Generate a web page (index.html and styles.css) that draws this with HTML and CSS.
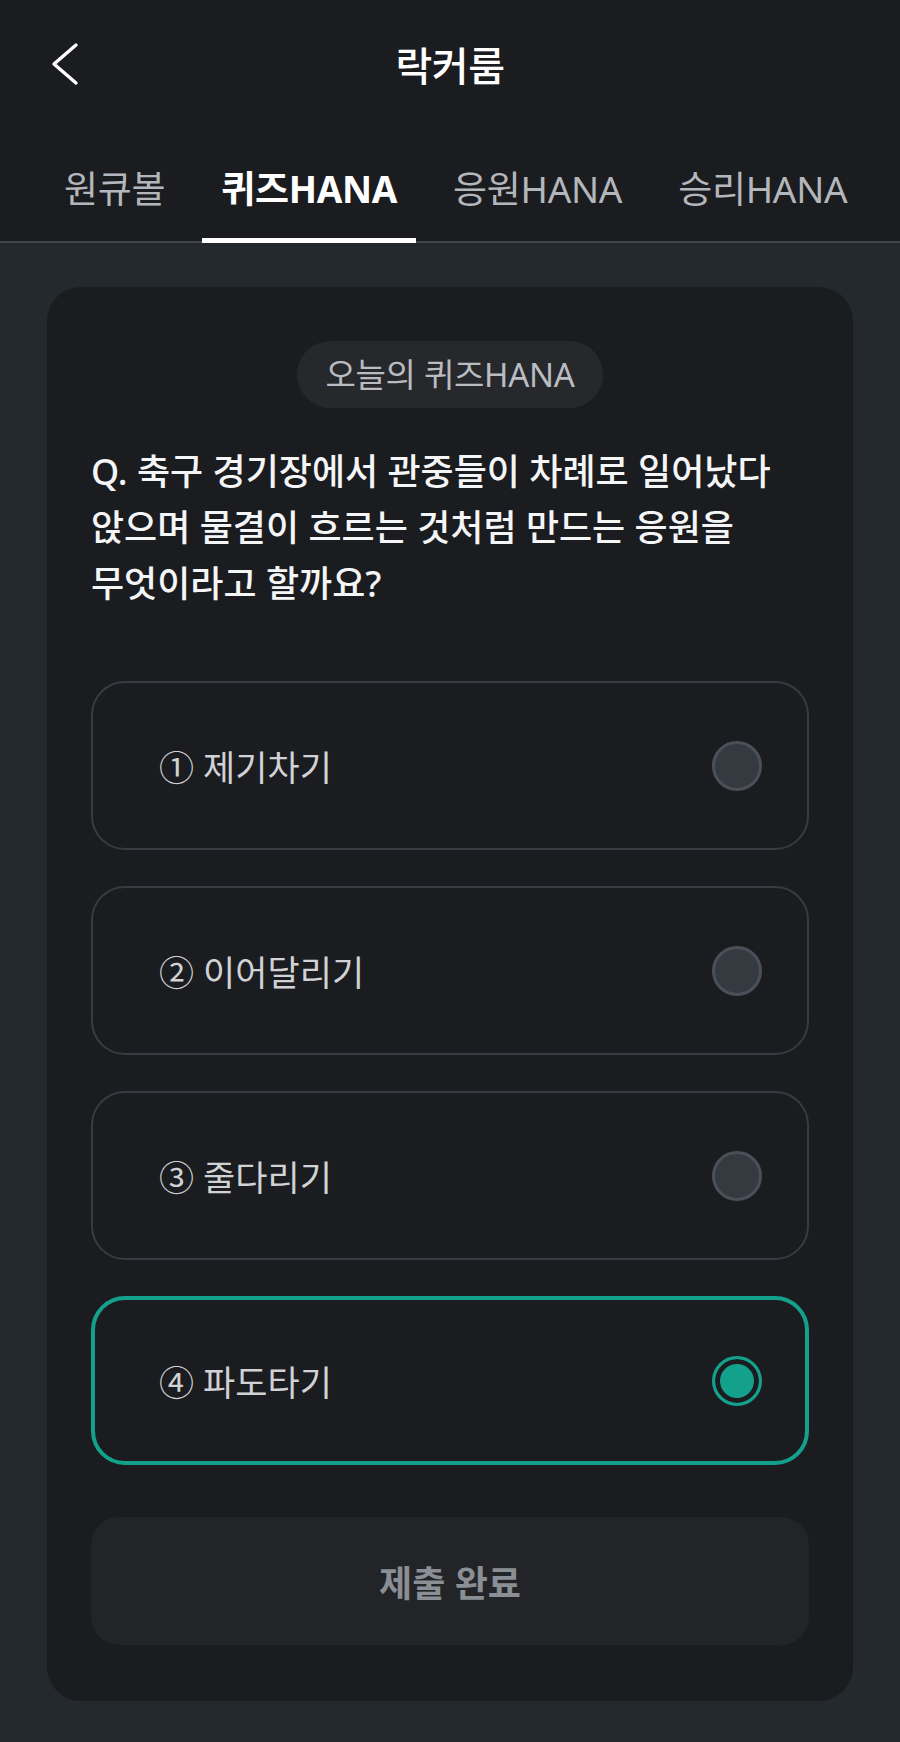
FILE: index.html
```html
<!DOCTYPE html>
<html lang="ko">
<head>
  <meta charset="utf-8">
  <link rel="stylesheet" href="styles.css">
</head>
<body>
<div class="page">
  <div class="header">
    <div class="topbar">
      <a class="back" href="#">
        <svg width="30" height="44" viewBox="0 0 30 44">
          <polyline points="26,3 4,22 26,41" fill="none" stroke="#ffffff" stroke-width="3.4" stroke-linecap="round" stroke-linejoin="round"/>
        </svg>
      </a>
      <div class="title">락커룸</div>
      <div></div>
    </div>
    <ul class="tabs">
      <li class="tab">원큐볼</li>
      <li class="tab active">퀴즈HANA</li>
      <li class="tab">응원HANA</li>
      <li class="tab">승리HANA</li>
    </ul>
  </div>

  <div class="content">
    <div class="card">
      <div class="badge">오늘의 퀴즈HANA</div>
      <p class="question">Q. 축구 경기장에서 관중들이 차례로 일어났다 앉으며 물결이 흐르는 것처럼 만드는 응원을 무엇이라고 할까요?</p>

      <ul class="options">
        <li class="option"><span class="label">① 제기차기</span><span class="radio"></span></li>
        <li class="option"><span class="label">② 이어달리기</span><span class="radio"></span></li>
        <li class="option"><span class="label">③ 줄다리기</span><span class="radio"></span></li>
        <li class="option selected"><span class="label">④ 파도타기</span><span class="radio"></span></li>
      </ul>

      <button class="submit">제출 완료</button>
    </div>
  </div>
</div>
</body>
</html>
```

FILE: styles.css
```css
* {
  box-sizing: border-box;
}
body {
  margin: 0;
  background-color: #23292c;
  font-family: "Noto Sans", "Noto Sans CJK KR", sans-serif;
  color: #ffffff;
}
ul {
  list-style: none;
  margin: 0;
  padding: 0;
}
.page {
  width: 900px;
  min-height: 1742px;
}

/* header */
.header {
  background-color: #1b1c1f;
}
.topbar {
  height: 128px;
  display: grid;
  grid-template-columns: 1fr auto 1fr;
  align-items: center;
}
.back {
  display: flex;
  align-items: center;
  padding-left: 50px;
}
.title {
  font-size: 40px;
  font-weight: 500;
  letter-spacing: -0.5px;
}
.tabs {
  display: flex;
  gap: 18px;
  padding-left: 45px;
  border-bottom: 2px solid #40464b;
}
.tab {
  position: relative;
  padding: 36px 19px 27px;
  line-height: 50px;
  font-size: 37px;
  color: #b3b7bc;
  letter-spacing: -0.3px;
}
.tab.active {
  color: #ffffff;
  font-weight: 700;
}
.tab.active::after {
  content: "";
  position: absolute;
  left: 0;
  right: 0;
  bottom: -2px;
  height: 5px;
  background-color: #ffffff;
}

/* card */
.content {
  padding: 44px 47px 41px;
}
.card {
  background-color: #1b1c1f;
  border-radius: 34px;
  padding: 54px 44px 56px;
}
.badge {
  width: fit-content;
  margin: 0 auto;
  height: 67px;
  line-height: 67px;
  padding: 0 28px;
  border-radius: 34px;
  background-color: #26282c;
  color: #b9bcc1;
  font-size: 33px;
  letter-spacing: -0.3px;
}
.question {
  margin: 36px 0 0;
  font-size: 36px;
  line-height: 56px;
  font-weight: 500;
  color: #f4f5f7;
  word-break: keep-all;
}

.options {
  margin-top: 69px;
  display: flex;
  flex-direction: column;
  gap: 36px;
}
.option {
  height: 169px;
  display: flex;
  align-items: center;
  justify-content: space-between;
  padding: 0 45px 0 66px;
  border: 2px solid #383b41;
  border-radius: 34px;
}
.option.selected {
  border: 4px solid #14a18b;
  padding: 0 43px 0 64px;
}
.label {
  font-size: 35px;
  color: #d0d2d6;
}
.radio {
  width: 50px;
  height: 50px;
  border-radius: 50%;
  border: 3px solid #4b5058;
  background-color: #353a41;
}
.option.selected .radio {
  border-color: #14a18b;
  background-color: #14a18b;
  box-shadow: inset 0 0 0 5px #1b1c1f;
}

.submit {
  display: block;
  width: 100%;
  height: 128px;
  margin-top: 52px;
  border: none;
  border-radius: 28px;
  background-color: #232427;
  color: #8a8e95;
  font-family: "Noto Sans", "Noto Sans CJK KR", sans-serif;
  font-size: 36px;
  font-weight: 700;
}
```
